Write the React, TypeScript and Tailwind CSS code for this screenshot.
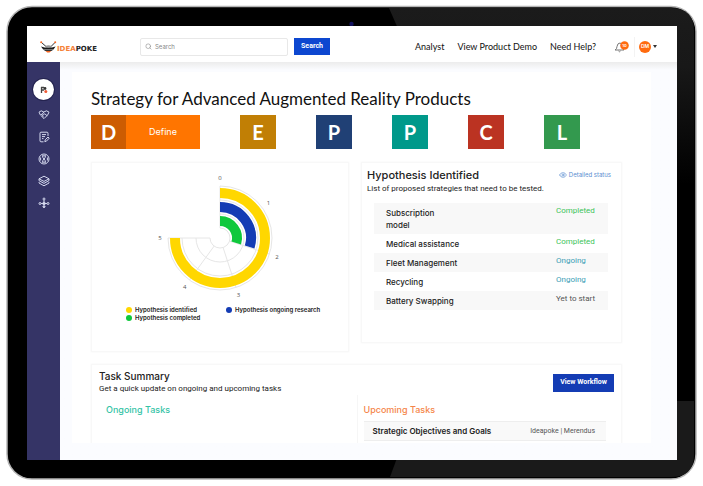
import React from "react";
import { Search, Eye } from "lucide-react";

const stages = [
  { letter: "E", name: "Explore", color: "bg-[#c17f05]" },
  { letter: "P", name: "Plan", color: "bg-[#204075]" },
  { letter: "P", name: "Pilot", color: "bg-[#00998a]" },
  { letter: "C", name: "Commit", color: "bg-[#bb3322]" },
  { letter: "L", name: "Launch", color: "bg-[#33994e]" },
];

const strategies = [
  { name: ["Subscription", "model"], status: "Completed", tone: "text-[#3cc45a]" },
  { name: ["Medical assistance"], status: "Completed", tone: "text-[#3cc45a]" },
  { name: ["Fleet Management"], status: "Ongoing", tone: "text-[#3a9db5]" },
  { name: ["Recycling"], status: "Ongoing", tone: "text-[#3a9db5]" },
  { name: ["Battery Swapping"], status: "Yet to start", tone: "text-[#555555]" },
];

const CX = 70;
const CY = 66;

function polar(r: number, deg: number) {
  const a = (deg * Math.PI) / 180;
  return [CX + r * Math.sin(a), CY - r * Math.cos(a)];
}

function arc(r: number, deg: number) {
  const [x, y] = polar(r, deg);
  return `M${CX} ${CY - r} A${r} ${r} 0 ${deg > 180 ? 1 : 0} 1 ${x} ${y}`;
}

function RadialChart() {
  return (
    <svg viewBox="0 0 140 132" className="mx-auto block h-[132px] w-[140px]" role="img" aria-label="Hypothesis progress">
      <g fill="none" stroke="#e6e6e6" strokeWidth="1">
        {[10, 24, 38, 52].map((r) => (
          <path key={r} d={arc(r, 270)} />
        ))}
        {[0, 108, 162, 216, 270].map((d) => {
          const [x1, y1] = polar(10, d);
          const [x2, y2] = polar(52, d);
          return <line key={d} x1={x1} y1={y1} x2={x2} y2={y2} />;
        })}
      </g>
      <g fill="none" strokeWidth="10">
        <path d={arc(45, 270)} stroke="#ffd700" />
        <path d={arc(31, 107)} stroke="#143cb4" />
        <path d={arc(17, 107)} stroke="#0fc83c" />
      </g>
      <g className="fill-[#555555] font-['Open_Sans',sans-serif] text-[6px]" textAnchor="middle">
        {[0, 1, 2, 3, 4, 5].map((n) => {
          const [x, y] = polar(60, n * 54);
          return (
            <text key={n} x={x} y={y + 2}>
              {n}
            </text>
          );
        })}
      </g>
    </svg>
  );
}

function LegendItem({ dot, label }: { dot: string; label: string }) {
  return (
    <li className="flex items-center gap-[3px]">
      <span className={`size-[6px] rounded-full ${dot}`} />
      {label}
    </li>
  );
}

function Logo() {
  return (
    <svg viewBox="0 0 62 12" className="block h-3 w-[62px]" role="img" aria-label="Ideapoke">
      <path d="M1.5 1.5 L6 5.5 M15 1.5 L11 5.5" stroke="#333" strokeWidth="1" />
      <circle cx="1.2" cy="1.2" r="1" fill="#f26522" />
      <circle cx="15.2" cy="1.2" r="1" fill="#f26522" />
      <path d="M5 5.5 Q8.3 3 12 5.5 L11 6.8 H6Z" fill="#999" />
      <path d="M1 5.6 Q8.300 8 15.600 5.600 L13.500 8.400 H3.200Z" fill="#1b1b1b" />
      <path d="M3.500 8.800 H13.200 L11.500 10 H5.200Z" fill="#333" />
      <path d="M5.500 10 H11.200 L9.500 11.6 H7.2Z" fill="#f26522" />
      <text x="17" y="10" className="font-['DejaVu_Sans',sans-serif] text-[7px] font-bold">
        <tspan fill="#f58238">IDEA</tspan>
        <tspan fill="#222">POKE</tspan>
      </text>
    </svg>
  );
}

function Bezel() {
  return (
    <svg viewBox="0 0 703 486" preserveAspectRatio="none" className="absolute inset-0 -z-10 h-full w-full" aria-hidden="true">
      <defs>
        <linearGradient id="shine" x1="0" y1="0" x2="0" y2="1">
          <stop offset="0" stopColor="#1b1b1b" />
          <stop offset="0.15" stopColor="#181818" />
          <stop offset="0.45" stopColor="#000" />
        </linearGradient>
      </defs>
      <rect x="7" y="6.5" width="689" height="472.5" rx="25" fill="#000" stroke="#b5b5b5" strokeWidth="1.5" />
      <path d="M389 8 H671 Q694 8 694 31 V400 H560Z" fill="url(#shine)" />
      <path d="M418 401 H694 V455 Q694 477 671 477 H390Z" fill="#1a1a1a" />
      <circle cx="351.5" cy="24" r="2.2" fill="#11115c" />
    </svg>
  );
}

const navItems = [
  {
    label: "Partners",
    drawing: (
      <>
        <path d="M1 3.2 L3.2 1.800 L5.800 3 L8.600 1.800 L11 3.200 M1 3.200 L2.400 6 L6 9.600 L9.600 6 L11 3.200" />
        <path d="M5.800 3 L4.400 5 Q5.600 6 6.800 4.800 L9.200 6.800 M4.200 6.800 L5.400 7.800 M3 5 L5.500 7" />
      </>
    ),
  },
  {
    label: "Notes",
    drawing: (
      <>
        <path d="M10 5 V2.200 Q10 1.200 9 1.200 H3 Q2 1.200 2 2.200 V9.800 Q2 10.800 3 10.800 H5.500" />
        <path d="M4 3.600 H8 M4 5.600 H7 M4 7.600 H5.500 M6.800 10.600 L7.200 8.800 L10 6 L11.200 7.200 L8.400 10.200Z" />
      </>
    ),
  },
  {
    label: "Timeline",
    drawing: (
      <>
        <circle cx="6" cy="6" r="5" />
        <path d="M4 2.800 H8 M4 9.200 H8 M4.600 3 Q4.600 5 6 6 Q7.400 7 7.400 9 M7.400 3 Q7.400 5 6 6 Q4.600 7 4.600 9 M2.600 4.500 V7.500 M9.400 4.500 V7.500" />
      </>
    ),
  },
  {
    label: "Layers",
    drawing: (
      <>
        <path d="M6 1.200 L11 3.800 L6 6.400 L1 3.800Z" />
        <path d="M1 3.800 V5.600 L6 8.400 L11 5.600 V3.800 M1 7.200 V8 L6 10.800 L11 8 V7.200" />
      </>
    ),
  },
  {
    label: "Network",
    drawing: (
      <>
        <path d="M6 3 V9 M3 6.500 H9" />
        <circle cx="6" cy="2" r="1" />
        <circle cx="6" cy="6.500" r="1.300" />
        <circle cx="2" cy="6.500" r="1" />
        <circle cx="10" cy="6.500" r="1" />
        <path d="M4.800 9.400 H7.200 L6 11Z" />
      </>
    ),
  },
];

function SideNav() {
  return (
    <nav className="flex w-[33px] shrink-0 flex-col items-center bg-[#353466] pt-[17px]">
      <a href="#home" aria-label="Home" className="flex size-[21px] items-center justify-center rounded-full bg-white ring-1 ring-[#24234f]">
        <svg viewBox="0 0 8 8" className="size-2">
          <path d="M1 1.5 H4 M1.5 1 V7 M1 4 H4" stroke="#444" strokeWidth="1.3" />
          <circle cx="5" cy="2.5" r="1.4" fill="#333" />
          <circle cx="5.8" cy="5.5" r="1.5" fill="#f05a35" />
        </svg>
      </a>
      <div className="mt-[9px] flex flex-col gap-[10px]">
        {navItems.map(({ label, drawing }) => (
          <a key={label} href={`#${label.toLowerCase()}`} aria-label={label}>
            <svg viewBox="0 0 12 12" className="size-3" fill="none" stroke="#d4d8ee" strokeWidth="1" strokeLinejoin="round">
              {drawing}
            </svg>
          </a>
        ))}
      </div>
    </nav>
  );
}

const card = "border border-[#f8f8f8] bg-white shadow-[0_0_2px_#f4f4f4]";

export default function App() {
  return (
    <div className="relative isolate flex h-screen flex-col bg-white px-[26px] py-[26px] pl-[27px] font-['Inter',sans-serif] text-[#222222]">
      <Bezel />
      <div className="flex min-h-0 flex-1 flex-col overflow-hidden bg-[#fbfcff]">
        <header className="z-10 flex h-9 shrink-0 items-center bg-white pt-[5px] pr-5 pl-[13px]">
          <Logo />
          <form className="ml-[38px] flex items-center gap-[6px]" onSubmit={(e) => e.preventDefault()}>
            <label className="flex h-[18px] w-[148px] items-center gap-[3px] rounded-[2px] border border-[#e8e8e8] px-1">
              <Search className="size-[7px] text-[#888888]" />
              <input type="search" aria-label="Search" placeholder="Search" className="min-w-0 flex-1 text-[6px] leading-[8px] outline-none placeholder:text-[#888888]" />
            </label>
            <button className="h-[17px] w-9 bg-[#0d47d0] font-['Roboto',sans-serif] text-[7px] font-bold text-white">Search</button>
          </form>
          <nav className="ml-auto flex gap-[13px] font-['Lato',sans-serif] text-[9px] leading-[12px] text-[#111111]">
            <a href="#analyst">Analyst</a>
            <a href="#demo">View Product Demo</a>
            <a href="#help">Need Help?</a>
          </nav>
          <button aria-label="Notifications" className="ml-[18px] flex">
            <svg viewBox="0 0 16 12" className="h-3 w-4">
              <path d="M1 9 Q3 8 3 5.5 Q3.5 2 6 2 Q8.5 2.5 8.5 5.5 Q8.5 8 10 9Z M4.5 10 Q5.5 11.5 6.5 10" fill="none" stroke="#777" strokeWidth="1" />
              <circle cx="10.5" cy="4.5" r="4.3" fill="#ff6b0f" />
              <text x="10.5" y="6" textAnchor="middle" className="fill-white text-[4px] font-bold">10</text>
            </svg>
          </button>
          <button aria-label="Account" className="ml-1 flex h-5 items-center gap-[2px] border-l border-[#f3f3f3] pl-1">
            <span className="flex size-3 items-center justify-center rounded-full bg-[#ff6b0f] text-[5px] font-semibold text-white">DM</span>
            <svg viewBox="0 0 4 3" className="h-[3px] w-1">
              <path d="M0 0 H4 L2 3Z" fill="#333" />
            </svg>
          </button>
        </header>

        <div className="flex min-h-0 flex-1">
          <SideNav />
          <div className="flex min-w-0 flex-1 bg-linear-to-b from-[#ececec] to-[#fbfcff] to-[8px]">
            <main className="mt-[10px] mr-[26px] mb-[17px] ml-3 min-w-0 flex-1 overflow-hidden bg-white pr-[29px] pl-[19px]">
              <h1 className="mt-[17px] font-['Lato',sans-serif] text-[17px] leading-[20px] text-[#111111]">
                Strategy for Advanced Augmented Reality Products
              </h1>

              <div className="mt-[6px] flex gap-10 font-['Lato',sans-serif] text-white">
                <button className="flex h-[34px] w-[109px]">
                  <span className="flex h-full w-[35px] items-center justify-center bg-[#cc5c02] text-[20px] font-bold">D</span>
                  <span className="flex h-full flex-1 items-center justify-center bg-[#ff7500] font-['Inter',sans-serif] text-[9px]">Define</span>
                </button>
                {stages.map((s) => (
                  <button key={s.name} aria-label={s.name} className={`h-[34px] w-9 text-[20px] font-bold ${s.color}`}>
                    {s.letter}
                  </button>
                ))}
              </div>

              <div className="mt-[13px] grid grid-cols-[258fr_261fr] items-start gap-3">
                <section className={`${card} h-[190px] pt-[9px]`}>
                  <RadialChart />
                  <ul className="mt-[2px] ml-[34px] grid grid-cols-[100px_1fr] text-[6px] leading-[8px] font-semibold whitespace-nowrap">
                    <LegendItem dot="bg-[#ffd700]" label="Hypothesis identified" />
                    <LegendItem dot="bg-[#143cb4]" label="Hypothesis ongoing research" />
                    <LegendItem dot="bg-[#0fc83c]" label="Hypothesis completed" />
                  </ul>
                </section>

                <section className={`${card} h-[181px] pt-[5px]`}>
                  <div className="flex items-center justify-between pr-[10px] pl-[5px]">
                    <h2 className="text-[11px] leading-[14px] font-medium">Hypothesis Identified</h2>
                    <a href="#status" className="flex items-center gap-[2px] text-[6px] leading-[8px] text-[#5b8ed0]">
                      <Eye className="size-2" />
                      Detailed status
                    </a>
                  </div>
                  <p className="pl-[5px] font-['Roboto',sans-serif] text-[8px] leading-[13px]">List of proposed strategies that need to be tested.</p>
                  <table className="mt-2 ml-3 w-[calc(100%-25px)] text-left">
                    <tbody>
                      {strategies.map((s) => (
                        <tr key={s.status + s.name[0]} className="odd:bg-[#f8f8f8]">
                          <th scope="row" className="pt-1 pb-[3px] pl-3 text-[8px] leading-[12px] font-medium">
                            {s.name.map((line) => (
                              <span key={line} className="block">{line}</span>
                            ))}
                          </th>
                          <td className={`w-[52px] py-[3px] align-top font-['Roboto',sans-serif] text-[8px] leading-[10px] whitespace-nowrap ${s.tone}`}>{s.status}</td>
                        </tr>
                      ))}
                    </tbody>
                  </table>
                </section>
              </div>

              <section className={`${card} mt-3 h-[100px] pt-[5px]`}>
                <div className="flex items-center justify-between px-[7px]">
                  <div>
                    <h2 className="text-[10px] leading-[13px] font-medium">Task Summary</h2>
                    <p className="font-['Roboto',sans-serif] text-[8px] leading-[12px]">Get a quick update on ongoing and upcoming tasks</p>
                  </div>
                  <button className="h-[18px] w-[61px] bg-[#143cb4] font-['Roboto',sans-serif] text-[7px] font-bold text-white">View Workflow</button>
                </div>
                <div className="grid grid-cols-2">
                  <div className="pt-[9px] pl-[14px]">
                    <h3 className="text-[9px] leading-[12px] font-medium text-[#34c3a6]">Ongoing Tasks</h3>
                  </div>
                  <div className="h-[60px] border-l border-[#f6f6f6] pt-[9px] pr-[15px] pl-[6px]">
                    <h3 className="text-[9px] leading-[12px] font-medium text-[#f58549]">Upcoming Tasks</h3>
                    <div className="mt-[5px] flex h-5 items-center justify-between border-y border-[#eeeeee] bg-[#f9f9f9] pr-[11px] pl-[9px] leading-[10px]">
                      <span className="text-[8px] font-semibold">Strategic Objectives and Goals</span>
                      <span className="font-['Roboto',sans-serif] text-[7px] text-[#555555]">Ideapoke | Merendus</span>
                    </div>
                  </div>
                </div>
              </section>
            </main>
          </div>
        </div>
      </div>
    </div>
  );
}
